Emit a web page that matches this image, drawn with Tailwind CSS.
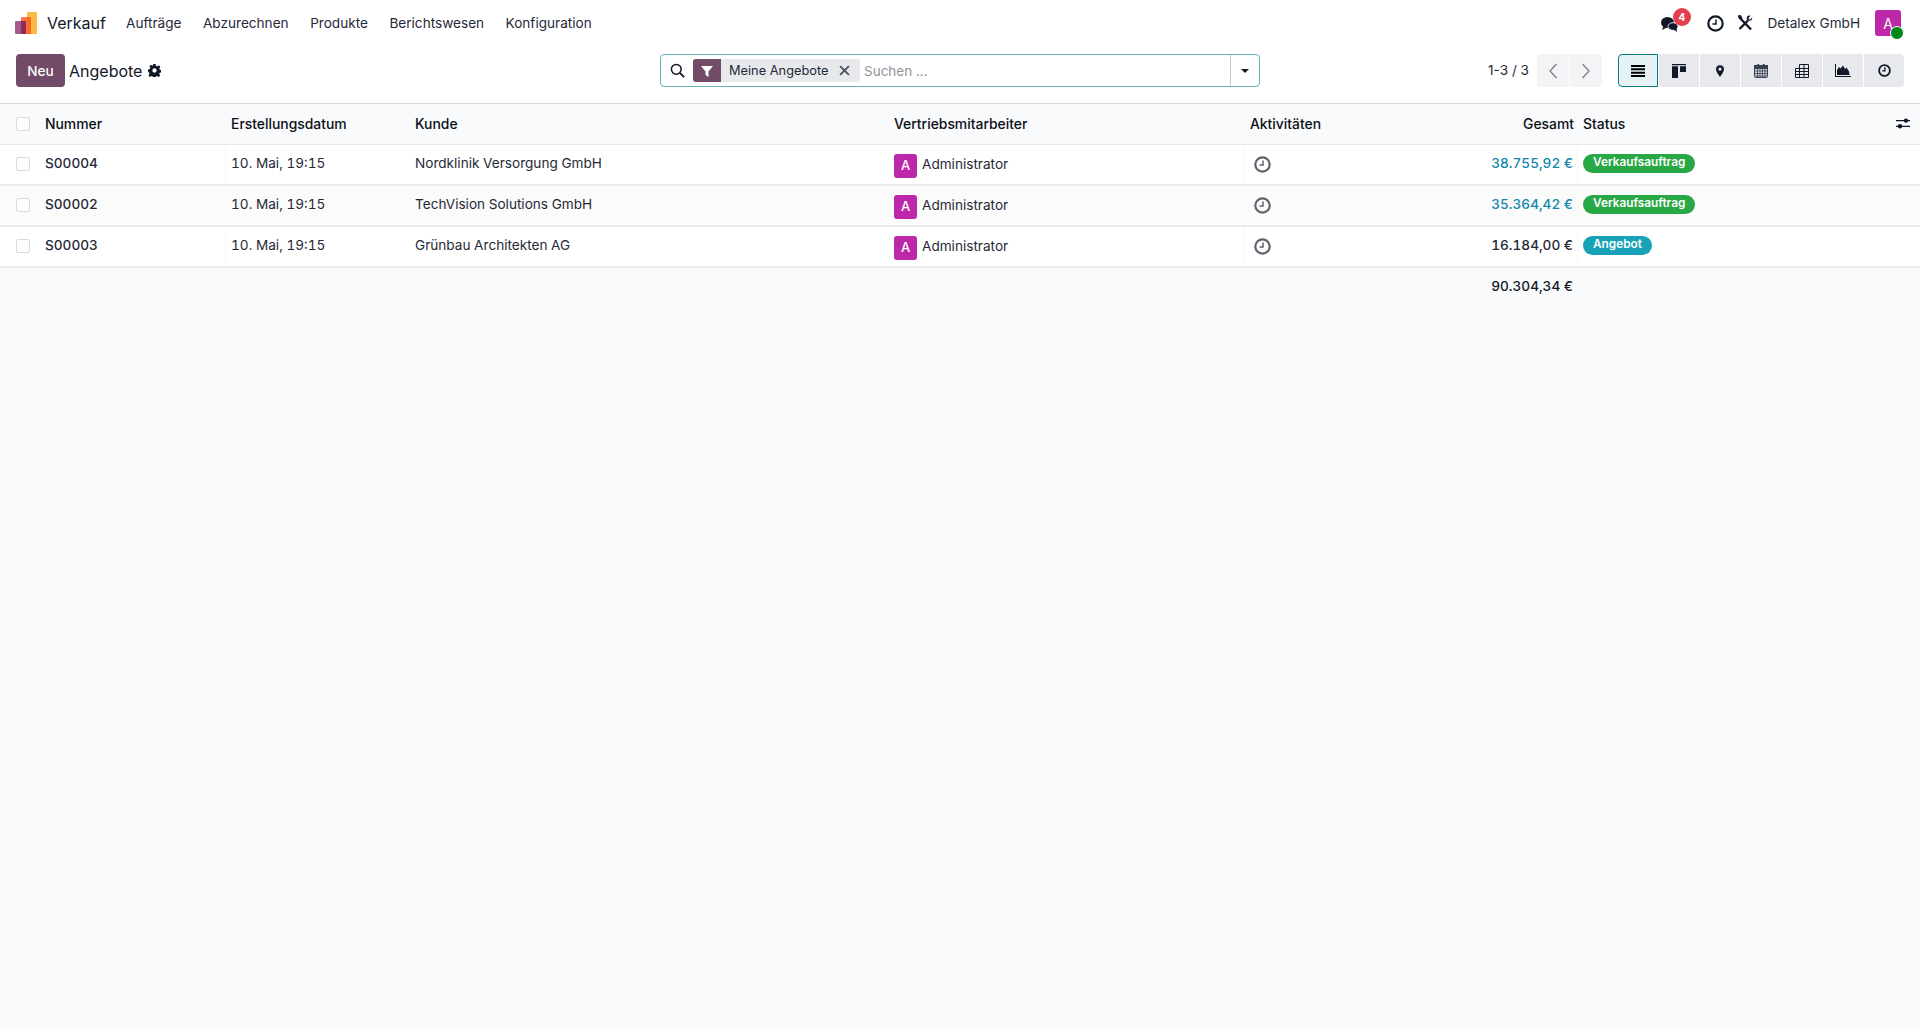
<!doctype html>
<html lang="de">
<head>
<meta charset="utf-8">
<title>Angebote</title>
<script src="https://cdn.jsdelivr.net/npm/@tailwindcss/browser@4"></script>
</head>
<body class="font-['Inter',sans-serif] text-[13.6px] text-[#111827] bg-[#f9fafb] h-[1031px] overflow-hidden">
<nav class="h-[46px] bg-white flex items-center pl-[15px] pr-[19px]">
  <svg class="w-[22px] h-[22px] shrink-0 mr-[10px]" viewBox="0 0 22 22">
    <rect x="12" y="0" width="10" height="22" rx="1" fill="#fbb945"/>
    <rect x="6" y="5" width="10" height="17" rx="1" fill="#fc7250"/>
    <rect x="12" y="5" width="4" height="17" fill="#fb6a1e"/>
    <rect x="0" y="9" width="11" height="13" rx="1" fill="#a05a90"/>
    <rect x="6" y="9" width="5" height="13" fill="#8f2c56"/>
  </svg>
  <span class="text-[16px] w-[79px]">Verkauf</span>
  <div class="flex gap-[21.500px] text-[#1f2937]">
    <span>Aufträge</span><span>Abzurechnen</span><span>Produkte</span><span>Berichtswesen</span><span>Konfiguration</span>
  </div>
  <div class="ml-auto flex items-center text-[#1f2937]">
    <div class="relative w-[17px] h-[15px] mr-[29px] top-[1.500px]">
      <svg class="w-[17px] h-[15px]" viewBox="0 0 17 15" fill="#111827">
        <ellipse cx="6.500" cy="5.500" rx="6.500" ry="5.500"/><path d="M2.500 9 1 13l5-2.500z"/>
        <ellipse cx="12" cy="9.500" rx="5" ry="3.800" stroke="#fff" stroke-width="0.800"/><path d="M12.500 12.500l3.500 2.500-.5-4z"/>
      </svg>
      <span class="absolute left-[12px] top-[-9px] w-[18px] h-[18px] rounded-full bg-[#e23e4d] text-white text-[10px] font-bold flex items-center justify-center">4</span>
    </div>
    <svg class="w-[17px] h-[17px] mr-[13px]" viewBox="0 0 17 17" fill="none" stroke="#111827"><circle cx="8.500" cy="8.500" r="7.200" stroke-width="2.200"/><path d="M9 4.500v4.500H5.500" stroke-width="1.500"/></svg>
    <svg class="w-[16px] h-[16px] mr-[14.500px]" viewBox="0 0 16 16" fill="none" stroke="#111827"><path d="M2 2l12 12.500" stroke-width="2.400"/><path d="M1 1.500 3 .7 5 3.500" stroke-width="1.600"/><path d="M2.500 14 11 5.500" stroke-width="2.400"/><path d="M13.500 .8 11.300 3.200l1.500 1.500 2.400-2.200c.3 2-1 3.500-3 3.300l-2-.5-.5-2c-.1-2 1.500-3.400 3.800-2.500z" fill="#111827" stroke="none"/></svg>
    <span class="mr-[15px]">Detalex GmbH</span>
    <div class="relative w-[26px] h-[26px] rounded-[3px] bg-[#bd27a9] text-white flex items-center justify-center text-[14px]">A
      <span class="absolute left-[15px] top-[16px] w-[12px] h-[12px] rounded-full bg-[#008818] border border-white box-content"></span>
    </div>
  </div>
</nav>

<header class="h-[58px] bg-white border-b border-[#d8dadd] px-4 pt-[8px] grid grid-cols-[1fr_600px_1fr] items-start">
  <div class="flex items-center h-[33px]">
    <button class="w-[49px] h-[33px] pt-px rounded-[4px] bg-[#714b67] text-white font-medium">Neu</button>
    <span class="ml-[4px] text-[16px]">Angebote</span>
    <svg class="w-[13px] h-[13px] ml-[6px]" viewBox="0 0 24 24" fill="#111827"><path fill-rule="evenodd" d="M10 0h4l.7 3.400 2.300 1 3-1.900 2.800 2.800-1.900 3 1 2.300 3.100.7v4l-3.400.7-1 2.300 1.900 3-2.800 2.800-3-1.900-2.300 1-.7 3.300h-4l-.7-3.400-2.300-1-3 1.900-2.800-2.800 1.900-3-1-2.300L0 14v-4l3.400-.7 1-2.300-1.900-3L5.300 1.200l3 1.900 1-1zM12 8a4 4 0 1 0 0 8 4 4 0 0 0 0-8z"/></svg>
  </div>
  <div class="h-[33px] rounded-[4px] border border-[#66b2b5] bg-white flex items-center">
    <svg class="w-[15px] h-[15px] ml-[9px] mr-[8px] shrink-0" viewBox="0 0 16 16" fill="none" stroke="#111827" stroke-width="1.600"><circle cx="6.700" cy="6.700" r="5.200"/><path d="M10.500 10.500 15 15" stroke-width="2"/></svg>
    <div class="h-[23px] w-[167px] rounded-[3px] bg-[#e7e9ed] flex items-center text-[#1f2937] text-[12.800px]">
      <span class="w-[28px] h-[23px] rounded-l-[3px] bg-[#714b67] flex items-center justify-center shrink-0">
        <svg class="w-[12px] h-[12px]" viewBox="0 0 12 12" fill="#fff"><path d="M0 1h12L7.500 6.500V12l-3-2V6.500z"/></svg>
      </span>
      <span class="ml-[8px] pt-px">Meine Angebote</span>
      <svg class="w-[11px] h-[11px] ml-auto mr-[10px]" viewBox="0 0 10 10" stroke="#4b5563" stroke-width="1.800"><path d="M1 1l8 8M9 1l-8 8"/></svg>
    </div>
    <span class="ml-[4px] pt-px text-[#8f949c] text-[13.500px]">Suchen ...</span>
    <div class="ml-auto w-[29px] h-full border-l border-[#c5c8cc] flex items-center justify-center">
      <span class="w-0 h-0 border-x-[4.500px] border-x-transparent border-t-[4.500px] border-t-[#111827]"></span>
    </div>
  </div>
  <div class="flex items-center justify-end h-[33px]">
    <span class="text-[#1f2937] mr-[8px]">1-3 / 3</span>
    <div class="flex gap-px mr-[16px]">
      <span class="w-[32px] h-[33px] rounded-l-[4px] bg-[#f3f4f6] flex items-center justify-center"><svg class="w-[10px] h-[16px]" viewBox="0 0 10 16" fill="none" stroke="#7b8088" stroke-width="1.300"><path d="M8.500 1 2 8l6.500 7"/></svg></span>
      <span class="w-[32px] h-[33px] rounded-r-[4px] bg-[#f3f4f6] flex items-center justify-center"><svg class="w-[10px] h-[16px]" viewBox="0 0 10 16" fill="none" stroke="#7b8088" stroke-width="1.300"><path d="M1.500 1 8 8l-6.500 7"/></svg></span>
    </div>
    <div class="flex gap-px">
      <span class="w-[40px] h-[33px] rounded-l-[4px] bg-[#e6f2f3] border border-[#017e84] flex items-center justify-center">
        <svg class="w-[14px] h-[12px]" viewBox="0 0 14 12" fill="#000"><path d="M0 0h14v2H0zM0 3.300h14v2H0zM0 6.700h14v2H0zM0 10h14v2H0z"/></svg>
      </span>
      <span class="w-[40px] h-[33px] bg-[#e7e9ed] flex items-center justify-center">
        <svg class="w-[14px] h-[14px]" viewBox="0 0 14 14" fill="#111827"><path d="M0 0h14v1.200H0zM0 2.200h6V14H0zM8 2.200h6V8H8z"/></svg>
      </span>
      <span class="w-[40px] h-[33px] bg-[#e7e9ed] flex items-center justify-center">
        <svg class="w-[8px] h-[12px]" viewBox="0 0 9 13" fill="#111827"><path fill-rule="evenodd" d="M4.500 0A4.400 4.400 0 0 1 9 4.400C9 6.800 6 11 4.500 13 3 11 0 6.800 0 4.400A4.400 4.400 0 0 1 4.500 0zm0 2.600a1.800 1.800 0 1 0 0 3.600 1.800 1.800 0 0 0 0-3.600z"/></svg>
      </span>
      <span class="w-[40px] h-[33px] bg-[#e7e9ed] flex items-center justify-center">
        <svg class="w-[14px] h-[14px]" viewBox="0 0 14 14"><rect x="0.500" y="1.500" width="13" height="12" rx="1" fill="#d5d7dc" stroke="#374151"/><rect x="0.500" y="1.500" width="13" height="3" fill="#374151" stroke="#374151"/><rect x="3" y="0" width="2.400" height="3" rx="1" fill="#374151"/><rect x="8.600" y="0" width="2.400" height="3" rx="1" fill="#374151"/><path d="M1 7h12M1 9.500h12M1 12h12M3.500 5v9M6 5v9M8.500 5v9M11 5v9" stroke="#374151" stroke-width="0.800"/></svg>
      </span>
      <span class="w-[40px] h-[33px] bg-[#e7e9ed] flex items-center justify-center">
        <svg class="w-[14px] h-[14px]" viewBox="0 0 14 14" fill="none" stroke="#111827"><path d="M4.500 .5H13.500V13.500H.5V4.500H13.500M.5 7.500H13.500M.5 10.500H13.500M4.500 .5V13.500M9 .5V13.500"/></svg>
      </span>
      <span class="w-[40px] h-[33px] bg-[#e7e9ed] flex items-center justify-center">
        <svg class="w-[16px] h-[13px]" viewBox="0 0 16 13" fill="#111827"><path d="M0 0h1v12h15v1H0z"/><path d="M2 11V6l2-3 1.500 1.500L8 1.500l2 3.500 1.500-1.500 2.500 4 .5 3.500z"/></svg>
      </span>
      <span class="w-[40px] h-[33px] rounded-r-[4px] bg-[#e7e9ed] flex items-center justify-center">
        <svg class="w-[13px] h-[13px]" viewBox="0 0 13 13" fill="none" stroke="#111827"><circle cx="6.500" cy="6.500" r="5.400" stroke-width="1.800"/><path d="M6.900 3.200v3.700H4.200" stroke-width="1.300"/></svg>
      </span>
    </div>
  </div>
</header>

<main class="tabular-nums">
  <div class="grid grid-cols-[226px_184px_479px_356px_333px_342px] h-[41px] items-center bg-[#f9fafb] border-b border-[#e7e9ed] font-medium text-[13.900px] text-[#0b0f17]">
    <div class="flex items-center pl-4"><span class="w-[14px] h-[14px] rounded-[2px] border border-[#d8dadd] bg-white/60"></span><span class="ml-[15px]">Nummer</span></div>
    <div class="pl-[5px]">Erstellungsdatum</div>
    <div class="pl-[5px]">Kunde</div>
    <div class="pl-[5px]">Vertriebsmitarbeiter</div>
    <div class="pl-[5px] flex"><span>Aktivitäten</span><span class="ml-auto mr-[4px]">Gesamt</span></div>
    <div class="pl-[5px] flex items-center justify-between pr-[10px]"><span>Status</span>
      <svg class="w-[14px] h-[13px]" viewBox="0 0 14 13" fill="#111827"><path d="M0 3h14v1.300H0zM0 8.700h14V10H0z"/><circle cx="10" cy="3.600" r="2.200"/><circle cx="4" cy="9.300" r="2.200"/></svg>
    </div>
  </div>

  <div class="grid grid-cols-[226px_184px_479px_356px_333px_342px] h-[41px] pb-[2px] items-center bg-white border-b-2 border-[#ebecee] text-[#1f2937]">
    <div class="flex items-center pl-4 h-full border-r border-[#f7f7f8]"><span class="w-[14px] h-[14px] rounded-[2px] border border-[#d8dadd] bg-white"></span><span class="ml-[15px] font-medium">S00004</span></div>
    <div class="pl-[5px]">10. Mai, 19:15</div>
    <div class="pl-[5px]">Nordklinik Versorgung GmbH</div>
    <div class="pl-[5px] flex items-center h-full border-r border-[#f7f7f8]"><span class="w-[23px] h-[24px] mt-[4px] rounded-[3px] bg-[#bd27a9] text-white flex items-center justify-center text-[13px] font-medium">A</span><span class="ml-[5px] mt-[2px]">Administrator</span></div>
    <div class="flex items-center h-full border-r border-[#f7f7f8]"><svg class="ml-[9px] mt-[2px] w-[17px] h-[17px]" viewBox="0 0 17 17" fill="none" stroke="#5f636f"><circle cx="8.500" cy="8.500" r="7.200" stroke-width="2.200"/><path d="M9 4.500v4.500H5.500" stroke-width="1.500"/></svg><span class="ml-auto mr-[4px] font-medium text-[#1287ad]">38.755,92 €</span></div>
    <div class="pl-[5px] flex items-center h-full"><span class="h-[19px] px-[10px] -mt-[1px] rounded-full bg-[#28a745] text-white text-[11.800px] font-semibold flex items-center">Verkaufsauftrag</span></div>
  </div>

  <div class="grid grid-cols-[226px_184px_479px_356px_333px_342px] h-[41px] pb-[2px] items-center bg-[#fbfbfb] border-b-2 border-[#ebecee] text-[#1f2937]">
    <div class="flex items-center pl-4 h-full border-r border-[#f7f7f8]"><span class="w-[14px] h-[14px] rounded-[2px] border border-[#d8dadd] bg-white"></span><span class="ml-[15px] font-medium">S00002</span></div>
    <div class="pl-[5px]">10. Mai, 19:15</div>
    <div class="pl-[5px]">TechVision Solutions GmbH</div>
    <div class="pl-[5px] flex items-center h-full border-r border-[#f7f7f8]"><span class="w-[23px] h-[24px] mt-[4px] rounded-[3px] bg-[#bd27a9] text-white flex items-center justify-center text-[13px] font-medium">A</span><span class="ml-[5px] mt-[2px]">Administrator</span></div>
    <div class="flex items-center h-full border-r border-[#f7f7f8]"><svg class="ml-[9px] mt-[2px] w-[17px] h-[17px]" viewBox="0 0 17 17" fill="none" stroke="#5f636f"><circle cx="8.500" cy="8.500" r="7.200" stroke-width="2.200"/><path d="M9 4.500v4.500H5.500" stroke-width="1.500"/></svg><span class="ml-auto mr-[4px] font-medium text-[#1287ad]">35.364,42 €</span></div>
    <div class="pl-[5px] flex items-center h-full"><span class="h-[19px] px-[10px] -mt-[1px] rounded-full bg-[#28a745] text-white text-[11.800px] font-semibold flex items-center">Verkaufsauftrag</span></div>
  </div>

  <div class="grid grid-cols-[226px_184px_479px_356px_333px_342px] h-[41px] pb-[2px] items-center bg-white border-b-2 border-[#ebecee] text-[#1f2937]">
    <div class="flex items-center pl-4 h-full border-r border-[#f7f7f8]"><span class="w-[14px] h-[14px] rounded-[2px] border border-[#d8dadd] bg-white"></span><span class="ml-[15px] font-medium">S00003</span></div>
    <div class="pl-[5px]">10. Mai, 19:15</div>
    <div class="pl-[5px]">Grünbau Architekten AG</div>
    <div class="pl-[5px] flex items-center h-full border-r border-[#f7f7f8]"><span class="w-[23px] h-[24px] mt-[4px] rounded-[3px] bg-[#bd27a9] text-white flex items-center justify-center text-[13px] font-medium">A</span><span class="ml-[5px] mt-[2px]">Administrator</span></div>
    <div class="flex items-center h-full border-r border-[#f7f7f8]"><svg class="ml-[9px] mt-[2px] w-[17px] h-[17px]" viewBox="0 0 17 17" fill="none" stroke="#5f636f"><circle cx="8.500" cy="8.500" r="7.200" stroke-width="2.200"/><path d="M9 4.500v4.500H5.500" stroke-width="1.500"/></svg><span class="ml-auto mr-[4px] font-medium">16.184,00 €</span></div>
    <div class="pl-[5px] flex items-center h-full"><span class="h-[19px] px-[10px] -mt-[1px] rounded-full bg-[#17a2b8] text-white text-[11.800px] font-semibold flex items-center">Angebot</span></div>
  </div>

  <div class="h-[38px] pb-[2px] w-[1578px] flex items-center justify-end pr-[5px] font-medium">90.304,34 €</div>
</main>
</body>
</html>
